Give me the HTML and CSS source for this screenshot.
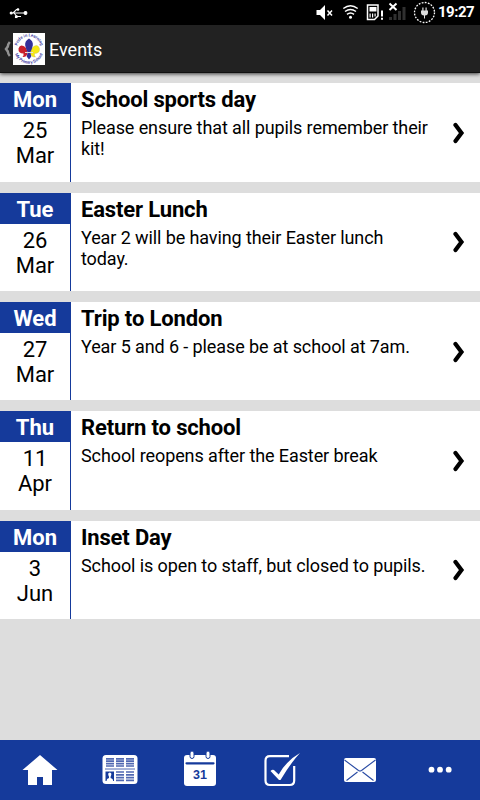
FILE: index.html
```html
<!DOCTYPE html>
<html lang="en">
<head>
  <meta charset="UTF-8" />
  <meta name="viewport" content="width=device-width, initial-scale=1" />
  <title>Events</title>
  <link rel="stylesheet" href="styles.css">
</head>
<body>
  <!-- Status bar -->
  <div class="status-bar">
    <svg class="usb" width="20" height="12" viewBox="0 0 20 12" fill="none" stroke="#fff" stroke-width="1.100">
      <path d="M2 6H16M4 6L7.500 2.500H10M5 6L8 9.500H12" />
      <circle cx="2.200" cy="6" r="1" fill="#fff" /><circle cx="16.500" cy="6" r="1.400" fill="#fff" />
      <circle cx="9" cy="2.500" r=".8" fill="#fff" /><rect x="6.500" y="9" width="1.500" height="1.500" fill="#fff" />
    </svg>
    <svg class="status-icons" width="122" height="26" viewBox="314 0 122 26">
      <path d="M316.500 10h3.500l5-5v15l-5-5h-3.500z" fill="#fff" />
      <path d="M327.500 10.500l4.500 5M332 10.500l-4.500 5" stroke="#fff" stroke-width="1.500" />
      <g fill="none" stroke="#fff" stroke-width="1.500">
        <path d="M343.300 8.500Q350.500 3 357.700 8.500M345 11.500Q350.500 7.500 356 11.500M347 14.300Q350.500 11.500 354 14.300" />
        <circle cx="350.500" cy="17.300" r="1.500" fill="#fff" stroke="none" />
        <path d="M367.500 5H378V16L374.500 19.500H367.500Z" />
      </g>
      <path d="M369.500 7h7v4.500h-7zM369.500 13.500h1.200v4h-1.200zM372 13.500h1.200v4H372zM374.500 13.500h1.200v3h-1.200z" fill="#fff" />
      <path d="M382 10.500v6M382 17.800v2" stroke="#fff" stroke-width="2" />
      <path d="M389 17h3v3h-3zM393.500 14h3v6h-3zM398 11h3v9h-3zM402.500 7h3v13h-3z" fill="#303030" />
      <path d="M389.500 3.500l7 6.500M396.500 3.500l-7 6.500" stroke="#fff" stroke-width="2" />
      <circle cx="424.500" cy="12.500" r="10" fill="none" stroke="#fff" stroke-width="1.300" stroke-dasharray="1.800 1.340" />
      <path d="M421 10.500h7v2q0 3-3 3v3h-1v-3q-3 0-3-3zM422.300 7.500h1.200v3h-1.200zM425.500 7.500h1.200v3h-1.200z" fill="#ddd" />
    </svg>
    <span class="clock">19:27</span>
  </div>

  <!-- Title bar -->
  <header class="action-bar">
    <svg class="back" width="8" height="16" viewBox="0 0 8 16">
      <path d="M6.800 1Q5 3 4.800 5.500L3 8L4.800 10.500Q5 13 6.800 15" fill="none" stroke="#929292" stroke-width="2.500" />
    </svg>
    <svg class="logo" width="32" height="32" viewBox="0 0 32 32">
      <defs>
        <path id="arcTop" d="M4 15.500a12 12 0 0 1 24 0" />
        <path id="arcBottom" d="M1.300 16a14.700 14.700 0 0 0 29.400 0" />
      </defs>
      <rect width="32" height="32" fill="#fff" />
      <text><textPath href="#arcTop" startOffset="50%" text-anchor="middle">Pride in Learning</textPath></text>
      <text><textPath href="#arcBottom" startOffset="50%" text-anchor="middle">My Primary School</textPath></text>
      <path d="M14.500 19.500Q14 24.500 9.500 24Q11 22.500 10.500 20.500Q5 20.500 5.500 15.500Q7 11 10.500 13Q14 14.500 14.500 19.500Z" fill="#c9202c" />
      <path d="M17.500 19.500Q18 24.500 22.500 24Q21 22.500 21.500 20.500Q27 20.500 26.500 15.500Q25 11 21.500 13Q18 14.500 17.500 19.500Z" fill="#f7e916" stroke="#b9aa43" stroke-width=".3" />
      <path d="M16 5.500Q11.500 8 12.200 12.500Q13 16 14.500 19H17.500Q19 16 19.800 12.500Q20.500 8 16 5.500ZM14.500 20h3l.8 3.500-2.300 3-2.300-3z" fill="#33309a" />
      <path d="M12 19.500h8" stroke="#ddd" />
    </svg>
    <h1>Events</h1>
  </header>

  <main class="events">
    <article class="event">
      <div class="date"><strong>Mon</strong><span>25</span><span>Mar</span></div>
      <div class="details">
        <h2>School sports day</h2>
        <p>Please ensure that all pupils remember their kit!</p>
      </div>
      <svg class="arrow" width="12" height="22" viewBox="0 0 12 22"><path d="M2.500 3L8.500 11L2.500 19" /></svg>
    </article>

    <article class="event">
      <div class="date"><strong>Tue</strong><span>26</span><span>Mar</span></div>
      <div class="details">
        <h2>Easter Lunch</h2>
        <p>Year 2 will be having their Easter lunch today.</p>
      </div>
      <svg class="arrow" width="12" height="22" viewBox="0 0 12 22"><path d="M2.500 3L8.500 11L2.500 19" /></svg>
    </article>

    <article class="event">
      <div class="date"><strong>Wed</strong><span>27</span><span>Mar</span></div>
      <div class="details">
        <h2>Trip to London</h2>
        <p>Year 5 and 6 - please be at school at 7am.</p>
      </div>
      <svg class="arrow" width="12" height="22" viewBox="0 0 12 22"><path d="M2.500 3L8.500 11L2.500 19" /></svg>
    </article>

    <article class="event">
      <div class="date"><strong>Thu</strong><span>11</span><span>Apr</span></div>
      <div class="details">
        <h2>Return to school</h2>
        <p>School reopens after the Easter break</p>
      </div>
      <svg class="arrow" width="12" height="22" viewBox="0 0 12 22"><path d="M2.500 3L8.500 11L2.500 19" /></svg>
    </article>

    <article class="event">
      <div class="date"><strong>Mon</strong><span>3</span><span>Jun</span></div>
      <div class="details">
        <h2>Inset Day</h2>
        <p>School is open to staff, but closed to pupils.</p>
      </div>
      <svg class="arrow" width="12" height="22" viewBox="0 0 12 22"><path d="M2.500 3L8.500 11L2.500 19" /></svg>
    </article>
  </main>

  <!-- Bottom tabs -->
  <nav class="tabs">
    <a class="tab" aria-label="Home">
      <svg width="80" height="60" viewBox="0 0 80 60">
        <path d="M40 15L57.500 30H52V45H43V37H37V45H28V30H22.500Z" fill="#fff" />
      </svg>
    </a>
    <a class="tab" aria-label="News">
      <svg width="80" height="60" viewBox="0 0 80 60">
        <rect x="22.500" y="15" width="35" height="29" rx="3.500" fill="#fff" />
        <g stroke="#5068b2" stroke-width="1.700">
          <path d="M26 18.800h8M26 21.200h8M26 23.600h8M26 26h8M36 18.800h8M36 21.200h8M36 23.600h8M36 26h8M46 18.800h8M46 21.200h8M46 23.600h8M46 26h8" />
          <path d="M25 29h30" stroke-width="1" />
          <path d="M36 32h8M36 34.800h8M36 37.600h8M36 40.400h8M46 32h8M46 34.800h8M46 37.600h8M46 40.400h8" />
        </g>
        <path d="M25.500 31.500h8.500V41h-8.500z" fill="#153a9b" />
        <path d="M26.500 41q0-2.500 2.500-3v-1.200q-2-4 .8-4.300q2.700.3.800 4.300V38q2.600.5 2.600 3z" fill="#fff" />
      </svg>
    </a>
    <a class="tab" aria-label="Calendar">
      <svg width="80" height="60" viewBox="0 0 80 60">
        <rect x="24" y="15" width="32" height="31" rx="3" fill="#fff" />
        <path d="M26.500 23.300h27" stroke="#153a9b" stroke-width="2.200" stroke-linecap="round" />
        <rect x="30" y="11" width="4" height="7.500" rx="2" fill="#fff" stroke="#153a9b" />
        <rect x="46" y="11" width="4" height="7.500" rx="2" fill="#fff" stroke="#153a9b" />
        <text class="day" x="40" y="39" text-anchor="middle">31</text>
      </svg>
    </a>
    <a class="tab" aria-label="Tasks">
      <svg width="80" height="60" viewBox="0 0 80 60">
        <path d="M49 16.200H30Q25.500 16.200 25.500 20.700V40.500Q25.500 45 30 45H49.700Q54.200 45 54.200 40.500V26" fill="none" stroke="#fff" stroke-width="2.200" />
        <path d="M30.500 31Q33 28.500 35 31L38.700 34.500Q46.500 20.500 60 13Q51 22.500 40.500 40L39 40Z" fill="#fff" />
      </svg>
    </a>
    <a class="tab" aria-label="Messages">
      <svg width="80" height="60" viewBox="0 0 80 60">
        <rect x="24" y="18" width="32" height="24" rx="2" fill="#fff" />
        <path d="M24.500 20L38.500 30.500Q40 31.500 41.500 30.500L55.500 20M26.500 40.500L37.500 32M53.500 40.500L42.500 32" fill="none" stroke="#294ba4" stroke-width="1.100" />
      </svg>
    </a>
    <a class="tab" aria-label="More">
      <svg width="80" height="60" viewBox="0 0 80 60" fill="#fff">
        <circle cx="31.500" cy="29.700" r="2.900" /><circle cx="40" cy="29.700" r="2.900" /><circle cx="48.700" cy="29.700" r="2.900" />
      </svg>
    </a>
  </nav>
</body>
</html>
```
FILE: styles.css
```css
* {
  box-sizing: border-box;
}

body {
  margin: 0;
  height: 800px;
  display: flex;
  flex-direction: column;
  font-family: Roboto, "Liberation Sans", sans-serif;
  color: #000;
  background-color: #ddd;
}

h1, h2, p {
  margin: 0;
}

svg {
  display: block;
}

.status-bar {
  height: 25px;
  display: flex;
  align-items: center;
  padding: 0 6px 0 9px;
  background-color: #000;
  color: #fff;
}

.status-icons {
  margin-left: auto;
}

.clock {
  width: 36px;
  margin-left: 2px;
  font-size: 15px;
  font-weight: 700;
  line-height: 25px;
  white-space: nowrap;
  letter-spacing: -0.5px;
}

.action-bar {
  height: 48px;
  display: flex;
  align-items: center;
  padding-left: 3px;
  background-color: #222;
  border-bottom: 1px solid #111;
  box-shadow: 0 1px 4px rgba(0, 0, 0, 0.75);
}

.back {
  margin-right: 2px;
}

.logo text {
  font-size: 4.2px;
  font-weight: 700;
  fill: #4442a5;
}

.action-bar h1 {
  margin-left: 4px;
  padding-top: 1px;
  font-size: 18px;
  font-weight: 400;
  color: #fff;
}

.events {
  flex: 1;
  display: flex;
  flex-direction: column;
  gap: 11px;
  padding-top: 10.2px;
}

.event {
  height: 98.4px;
  display: flex;
  background-color: #fff;
}

.date {
  width: 71px;
  border-right: 1px solid #153a9b;
  font-size: 22px;
  line-height: 25px;
  text-align: center;
}

.date strong {
  display: block;
  height: 31px;
  margin-bottom: 4px;
  line-height: 33px;
  color: #fff;
  background-color: #153a9b;
}

.date span {
  display: block;
}

.details {
  flex: 1;
  padding: 4px 0 0 10px;
}

.details h2 {
  font-size: 22px;
  font-weight: 700;
  line-height: 26px;
  letter-spacing: -0.15px;
}

.details p {
  margin-top: 4px;
  font-size: 18px;
  line-height: 21px;
  letter-spacing: -0.1px;
}

.arrow {
  align-self: center;
  margin: 1px 15px 0 20px;
}

.arrow path {
  fill: none;
  stroke: #000;
  stroke-width: 4.2;
  stroke-linecap: round;
}

.tabs {
  height: 60px;
  display: flex;
  background-color: #153a9b;
}

.tab {
  width: 80px;
}

.day {
  font-family: "Liberation Sans", sans-serif;
  font-size: 12.5px;
  font-weight: 700;
  fill: #153a9b;
}
```
